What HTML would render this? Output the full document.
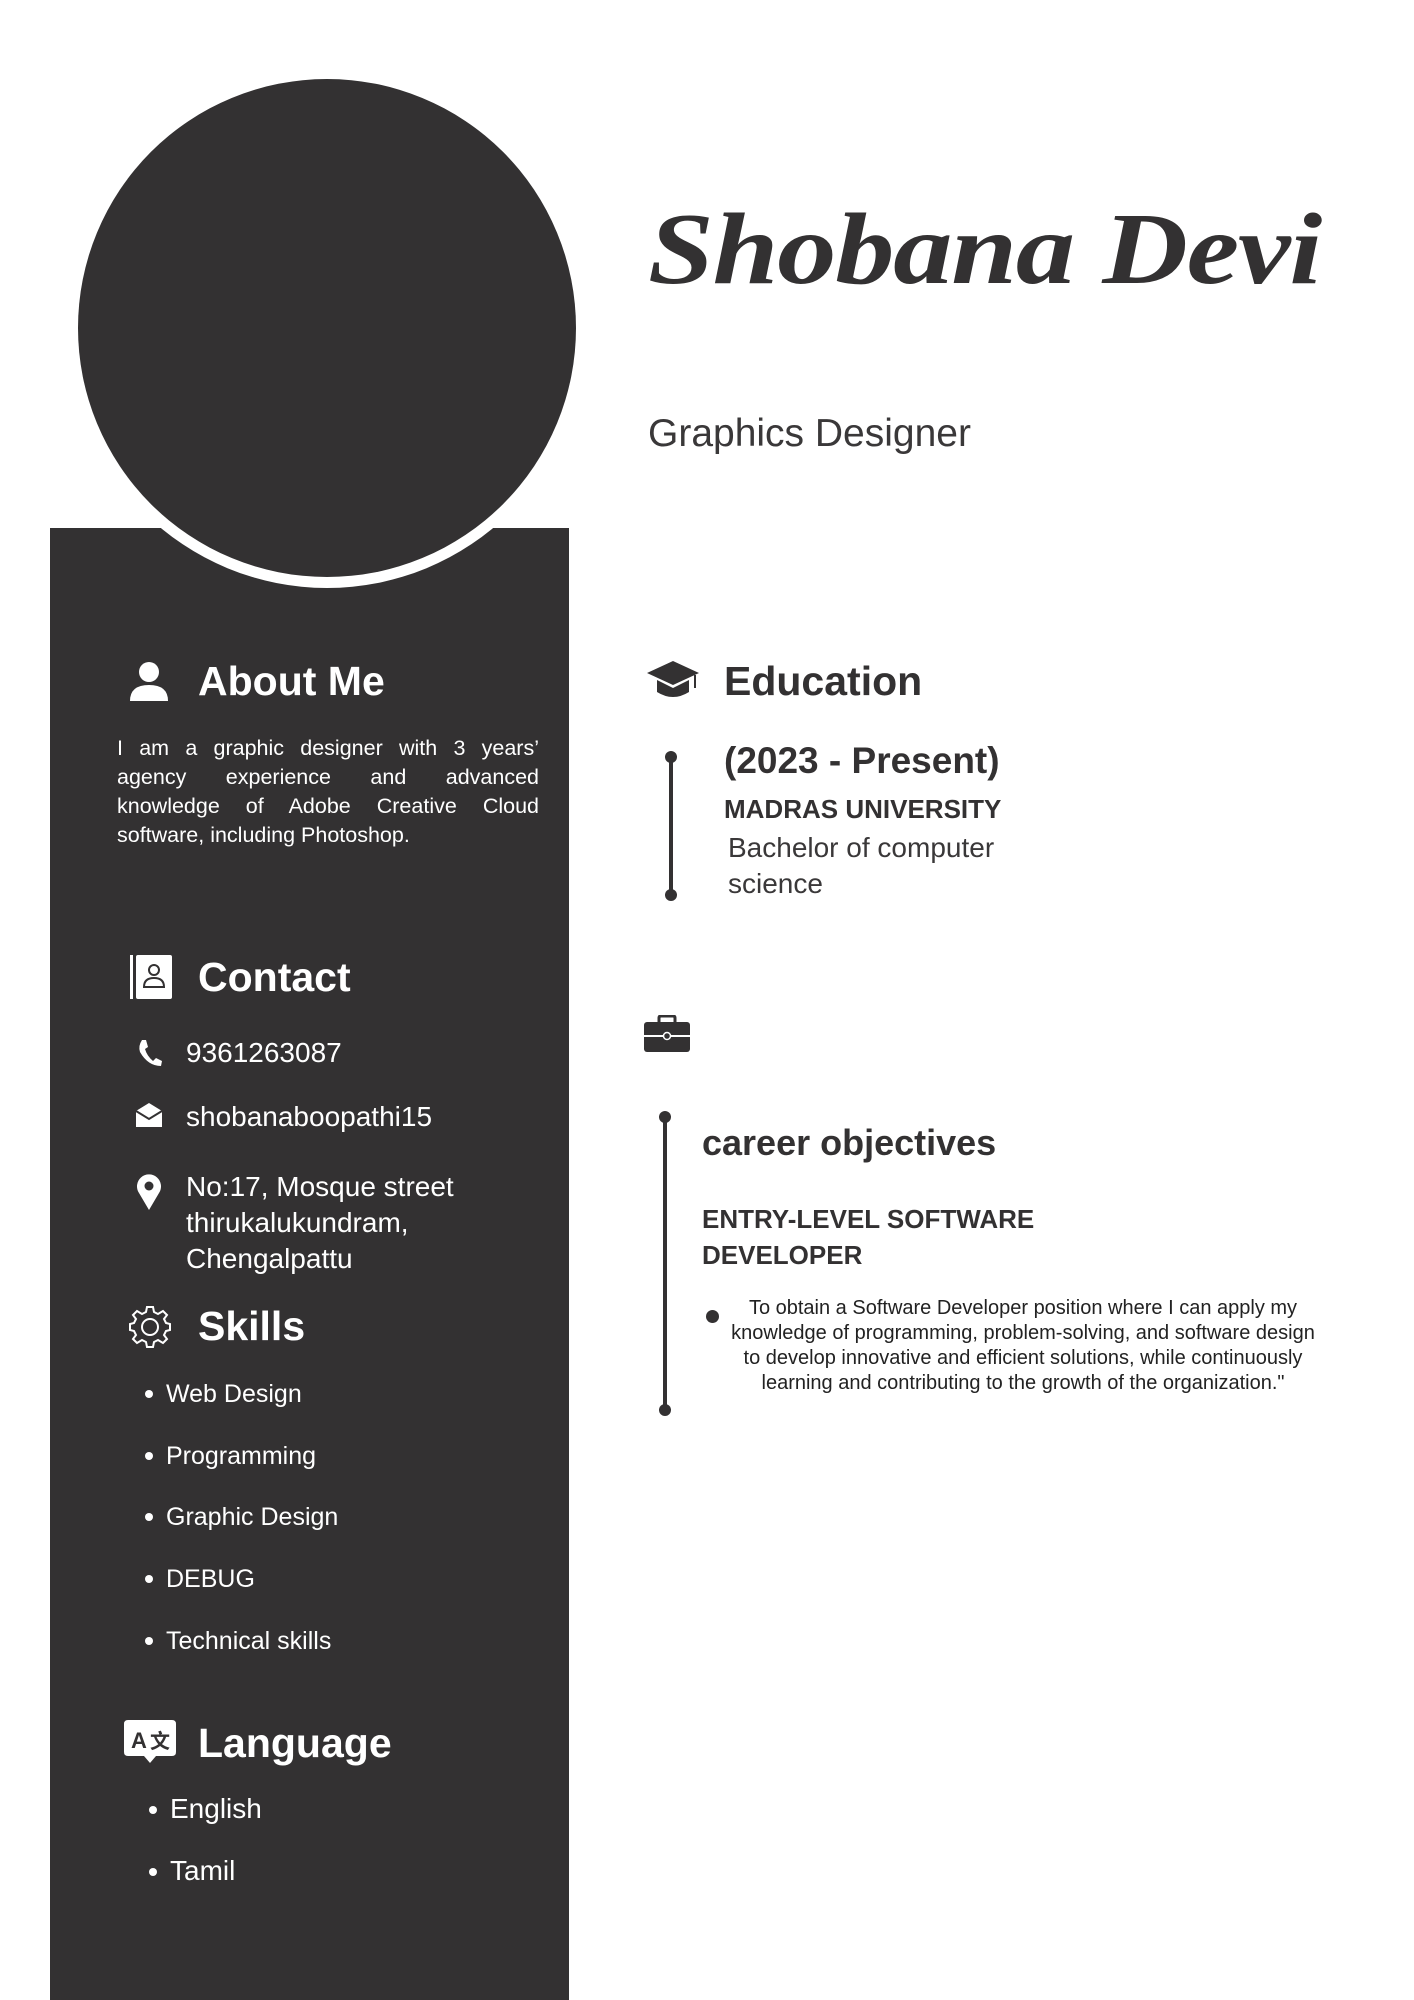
<!DOCTYPE html>
<html><head><meta charset="utf-8"><style>
*{margin:0;padding:0;box-sizing:border-box}
body{width:1414px;height:2000px;background:#fff;position:relative;overflow:hidden;font-family:"Liberation Sans",sans-serif;color:#333132}
.a{position:absolute;white-space:nowrap}
.w{color:#fff}
.h{font-weight:bold;font-size:41px;line-height:50px}
.li{font-size:25px;line-height:30px}
.dot{position:absolute;width:8px;height:8px;border-radius:50%;background:#fff}
</style></head><body>
<div style="position:absolute;left:50px;top:528px;width:519px;height:1472px;background:#333132"></div>
<div style="position:absolute;left:67px;top:68px;width:520px;height:520px;border-radius:50%;background:#fff"></div>
<div style="position:absolute;left:78px;top:79px;width:498px;height:498px;border-radius:50%;background:#333132"></div>

<div class="a" style="left:648px;top:198px;font-family:'Liberation Serif',serif;font-weight:bold;font-style:italic;font-size:102px;line-height:104px;transform:scaleX(1.16);transform-origin:left;letter-spacing:-1px">Shobana Devi</div>
<div class="a" style="left:648px;top:412px;font-size:39px;line-height:44px;color:#3a3839">Graphics Designer</div>

<!-- About -->
<svg class="a" style="left:128px;top:660px" width="42" height="42" viewBox="0 0 42 42"><circle cx="21" cy="12" r="10" fill="#fff"/><path d="M2 41 Q2 25 21 25 Q40 25 40 41Z" fill="#fff"/></svg>
<div class="a w h" style="left:198px;top:656px">About Me</div>
<div class="w" style="position:absolute;left:117px;top:734px;width:422px;font-size:21.5px;line-height:29px;text-align:justify;text-align-last:left">I am a graphic designer with 3 years’ agency experience and advanced knowledge of Adobe Creative Cloud software, including Photoshop.</div>

<!-- Contact -->
<svg class="a" style="left:130px;top:955px" width="42" height="44" viewBox="0 0 42 44"><rect x="0" y="0" width="3" height="44" fill="#fff"/><rect x="6" y="0" width="36" height="44" rx="2" fill="#fff"/><circle cx="24" cy="15" r="5" fill="none" stroke="#333132" stroke-width="2"/><path d="M14 32 Q14 23 24 23 Q34 23 34 32Z" fill="none" stroke="#333132" stroke-width="2"/></svg>
<div class="a w h" style="left:198px;top:952px">Contact</div>
<svg class="a" style="left:136px;top:1038px" width="28" height="30" viewBox="0 0 28 30"><path d="M6 2 L10 2 L12 9 L9 11 Q11 18 17 23 L20 20 L26 23 L25 28 Q12 28 4 14 Q2 8 6 2Z" fill="#fff"/></svg>
<div class="a w" style="left:186px;top:1036px;font-size:28px;line-height:34px">9361263087</div>
<svg class="a" style="left:135px;top:1102px" width="28" height="26" viewBox="0 0 28 26"><path d="M1 9 L14 1 L27 9 L27 25 L1 25Z" fill="#fff"/><path d="M1 9 L14 17 L27 9" fill="none" stroke="#333132" stroke-width="2"/></svg>
<div class="a w" style="left:186px;top:1100px;font-size:28px;line-height:34px">shobanaboopathi15</div>
<svg class="a" style="left:136px;top:1173px" width="26" height="38" viewBox="0 0 26 38"><path d="M13 37 L3 20 A12 12 0 1 1 23 20Z" fill="#fff"/><circle cx="13" cy="13" r="4.5" fill="#333132"/></svg>
<div class="w" style="position:absolute;left:186px;top:1169px;font-size:28px;line-height:36px">No:17, Mosque street<br>thirukalukundram,<br>Chengalpattu</div>

<!-- Skills -->
<svg class="a" style="left:128px;top:1305px" width="44" height="44" viewBox="-22 -22 44 44"><g fill="none" stroke="#fff" stroke-width="2"><path d="M-3 -20 L3 -20 L4 -15 L8 -13 L13 -16 L17 -12 L14 -8 L16 -4 L20 -3 L20 3 L16 4 L14 8 L17 12 L13 16 L8 13 L4 15 L3 20 L-3 20 L-4 15 L-8 13 L-13 16 L-17 12 L-14 8 L-16 4 L-20 3 L-20 -3 L-16 -4 L-14 -8 L-17 -12 L-13 -16 L-8 -13 L-4 -15Z"/><circle r="8"/></g></svg>
<div class="a w h" style="left:198px;top:1301px">Skills</div>
<div class="dot" style="left:145px;top:1390px"></div><div class="a w li" style="left:166px;top:1379px">Web Design</div>
<div class="dot" style="left:145px;top:1452px"></div><div class="a w li" style="left:166px;top:1441px">Programming</div>
<div class="dot" style="left:145px;top:1513px"></div><div class="a w li" style="left:166px;top:1502px">Graphic Design</div>
<div class="dot" style="left:145px;top:1575px"></div><div class="a w li" style="left:166px;top:1564px">DEBUG</div>
<div class="dot" style="left:145px;top:1637px"></div><div class="a w li" style="left:166px;top:1626px">Technical skills</div>

<!-- Language -->
<svg class="a" style="left:124px;top:1720px" width="52" height="44" viewBox="0 0 52 44"><path d="M4 0 H48 Q52 0 52 4 V32 Q52 36 48 36 H32 L26 43 L20 36 H4 Q0 36 0 32 V4 Q0 0 4 0Z" fill="#fff"/><text x="7" y="28" font-family="Liberation Sans" font-weight="bold" font-size="22" fill="#333132">A</text><text x="26" y="28" font-family="Noto Sans CJK SC" font-weight="bold" font-size="20" fill="#333132">文</text></svg>
<div class="a w h" style="left:198px;top:1718px">Language</div>
<div class="dot" style="left:149px;top:1806px"></div><div class="a w" style="left:170px;top:1792px;font-size:28px;line-height:34px">English</div>
<div class="dot" style="left:149px;top:1868px"></div><div class="a w" style="left:170px;top:1854px;font-size:28px;line-height:34px">Tamil</div>

<!-- Education -->
<svg class="a" style="left:646px;top:660px" width="54" height="42" viewBox="0 0 54 42"><path d="M27 1 L53 13 L27 25 L1 13Z" fill="#333132"/><path d="M11 20 L11 32 Q27 42 43 32 L43 20 L27 28Z" fill="#333132"/><path d="M49 15 V28" stroke="#333132" stroke-width="2"/></svg>
<div class="a h" style="left:724px;top:656px">Education</div>
<div style="position:absolute;left:669px;top:757px;width:4px;height:138px;background:#333132"></div>
<div style="position:absolute;left:665px;top:751px;width:12px;height:12px;border-radius:50%;background:#333132"></div>
<div style="position:absolute;left:665px;top:889px;width:12px;height:12px;border-radius:50%;background:#333132"></div>
<div class="a" style="left:724px;top:739px;font-weight:bold;font-size:37px;line-height:44px">(2023 - Present)</div>
<div class="a" style="left:724px;top:793px;font-weight:bold;font-size:26px;line-height:32px">MADRAS UNIVERSITY</div>
<div style="position:absolute;left:728px;top:830px;font-size:28px;line-height:36px;color:#3a3839">Bachelor of computer<br>science</div>

<!-- Briefcase -->
<svg class="a" style="left:644px;top:1015px" width="46" height="38" viewBox="0 0 46 38"><path d="M15 8 V3 Q15 1 17 1 H29 Q31 1 31 3 V8" fill="none" stroke="#333132" stroke-width="3"/><rect x="0" y="7" width="46" height="30" rx="3" fill="#333132"/><path d="M0 21 H46" stroke="#fff" stroke-width="2"/><circle cx="23" cy="21" r="3.5" fill="#333132" stroke="#fff" stroke-width="1.5"/></svg>

<!-- career -->
<div style="position:absolute;left:663px;top:1117px;width:4px;height:293px;background:#333132"></div>
<div style="position:absolute;left:659px;top:1111px;width:12px;height:12px;border-radius:50%;background:#333132"></div>
<div style="position:absolute;left:659px;top:1404px;width:12px;height:12px;border-radius:50%;background:#333132"></div>
<div class="a" style="left:702px;top:1121px;font-weight:bold;font-size:36px;line-height:44px">career objectives</div>
<div style="position:absolute;left:702px;top:1201px;font-weight:bold;font-size:26px;line-height:36px">ENTRY-LEVEL SOFTWARE<br>DEVELOPER</div>
<div style="position:absolute;left:706px;top:1310px;width:13px;height:13px;border-radius:50%;background:#333132"></div>
<div style="position:absolute;left:728px;top:1296px;width:590px;font-size:20px;line-height:25px;text-align:center;color:#222">To obtain a Software Developer position where I can apply my knowledge of programming, problem-solving, and software design to develop innovative and efficient solutions, while continuously learning and contributing to the growth of the organization."</div>
</body></html>
